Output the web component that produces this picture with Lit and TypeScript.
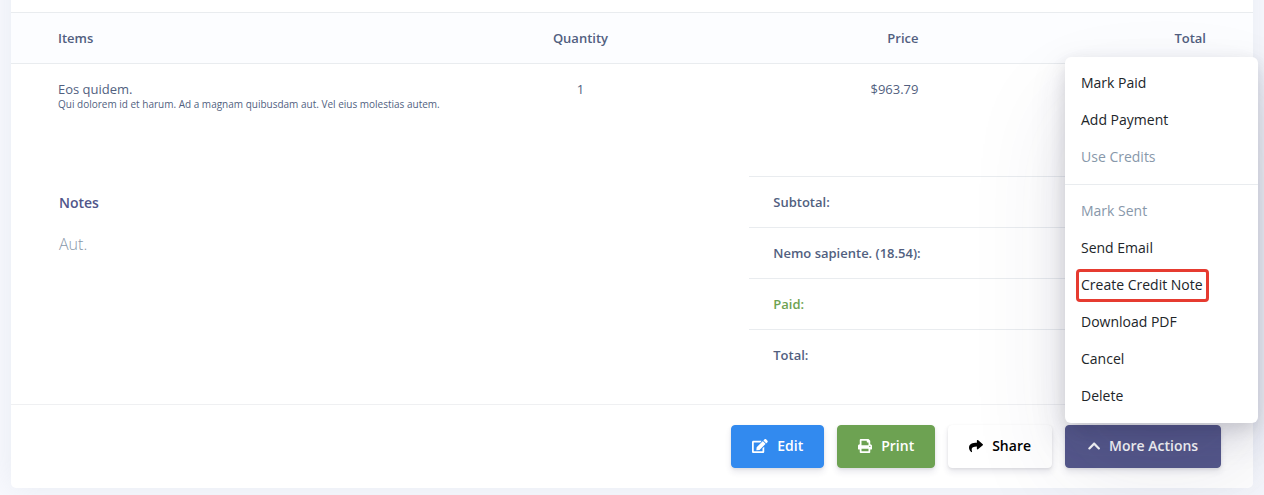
import { LitElement, html, css, svg } from "lit";
import { customElement, property, state } from "lit/decorators.js";

const ICONS = {
  edit: {
    box: "0 0 576 512",
    path: "M402.6 83.2l90.2 90.2c3.8 3.8 3.8 10 0 13.8L274.4 405.6l-92.8 10.3c-12.4 1.4-22.9-9.1-21.5-21.5l10.3-92.8L388.8 83.2c3.8-3.8 10-3.8 13.8 0zm162-22.9l-48.8-48.8c-15.2-15.2-39.9-15.2-55.2 0l-35.4 35.4c-3.8 3.8-3.8 10 0 13.8l90.2 90.2c3.8 3.8 10 3.8 13.8 0l35.4-35.4c15.2-15.3 15.2-40 0-55.2zM384 346.2V448H64V128h229.8c3.2 0 6.2-1.3 8.5-3.5l40-40c7.6-7.6 2.2-20.5-8.5-20.5H48C21.5 64 0 85.5 0 112v352c0 26.5 21.5 48 48 48h352c26.5 0 48-21.5 48-48V306.2c0-10.7-12.9-16-20.5-8.5l-40 40c-2.2 2.3-3.5 5.3-3.5 8.5z",
  },
  print: {
    box: "0 0 512 512",
    path: "M448 192V77.25c0-8.49-3.37-16.62-9.37-22.63L393.37 9.37c-6-6-14.14-9.37-22.63-9.37H96C78.33 0 64 14.33 64 32v160c-35.35 0-64 28.65-64 64v112c0 8.84 7.16 16 16 16h48v96c0 17.67 14.33 32 32 32h320c17.67 0 32-14.33 32-32v-96h48c8.84 0 16-7.16 16-16V256c0-35.35-28.65-64-64-64zm-64 256H128v-96h256v96zm0-224H128V64h192v48c0 8.84 7.16 16 16 16h48v96zm48 72c-13.25 0-24-10.75-24-24 0-13.26 10.75-24 24-24s24 10.74 24 24c0 13.25-10.75 24-24 24z",
  },
  share: {
    box: "0 0 512 512",
    path: "M503.691 189.836L327.687 37.851C312.281 24.546 288 35.347 288 56.015v80.053C127.371 137.907 0 170.1 0 322.326c0 61.441 39.581 122.309 83.333 154.132 13.653 9.931 33.111-2.533 28.077-18.631C66.066 312.814 132.917 274.316 288 272.085V360c0 20.7 24.3 31.453 39.687 18.164l176.004-152c11.071-9.562 11.086-26.753 0-36.328z",
  },
  up: {
    box: "0 0 448 512",
    path: "M240.971 130.524l194.343 194.343c9.373 9.373 9.373 24.569 0 33.941l-22.667 22.667c-9.357 9.357-24.522 9.375-33.901.04L224 227.495 69.255 381.516c-9.379 9.335-24.544 9.317-33.901-.04l-22.667-22.667c-9.373-9.373-9.373-24.569 0-33.941L207.03 130.525c9.372-9.373 24.568-9.373 33.941-.001z",
  },
};

@customElement("action-button")
export class ActionButton extends LitElement {
  @property() icon: keyof typeof ICONS = "edit";
  @property() variant = "info";

  static styles = css`
    :host {
      display: block;
    }
    button {
      display: flex;
      align-items: center;
      justify-content: center;
      gap: 9px;
      width: 100%;
      margin: 0;
      padding: 10px 20px 11px;
      border: 1px solid transparent;
      border-radius: 4px;
      font: 600 14px/20px "Open Sans", sans-serif;
      white-space: nowrap;
      color: #fff;
      cursor: pointer;
      box-shadow: 0 4px 6px rgba(50, 50, 93, 0.11), 0 1px 3px rgba(0, 0, 0, 0.08);
    }
    .info {
      background: #328aef;
      border-color: #328aef;
    }
    .success {
      background: #6da252;
      border-color: #6da252;
    }
    .white {
      background: #fff;
      border-color: #fff;
      color: #000;
    }
    .default {
      background: #55588b;
      border-color: #55588b;
    }
    svg {
      height: 14px;
      fill: currentColor;
    }
  `;

  render() {
    const icon = ICONS[this.icon];
    return html`<button type="button" class=${this.variant}>
      <svg viewBox=${icon.box} aria-hidden="true">${svg`<path d=${icon.path}></path>`}</svg>
      <slot></slot>
    </button>`;
  }
}

interface MenuEntry {
  label: string;
  disabled?: boolean;
  marked?: boolean;
}

@customElement("actions-menu")
export class ActionsMenu extends LitElement {
  @state() private groups: MenuEntry[][] = [
    [{ label: "Mark Paid" }, { label: "Add Payment" }, { label: "Use Credits", disabled: true }],
    [
      { label: "Mark Sent", disabled: true },
      { label: "Send Email" },
      { label: "Create Credit Note", marked: true },
      { label: "Download PDF" },
      { label: "Cancel" },
      { label: "Delete" },
    ],
  ];

  static styles = css`
    :host {
      display: block;
      box-sizing: border-box;
      padding: 8px 0;
      border-radius: 6px;
      background: #fff;
      box-shadow: 0 50px 100px rgba(50, 50, 93, 0.1), 0 15px 35px rgba(50, 50, 93, 0.15),
        0 5px 15px rgba(0, 0, 0, 0.1);
    }
    button {
      display: block;
      width: 100%;
      margin: 0;
      padding: 8px 16px 9px;
      border: 0;
      background: none;
      text-align: left;
      font: 400 14px/20px "Open Sans", sans-serif;
      color: #212529;
      cursor: pointer;
    }
    button:disabled {
      color: #8898aa;
    }
    hr {
      height: 1px;
      margin: 8px 0;
      border: 0;
      background: #e9ecef;
    }
    .marked {
      position: relative;
    }
    .marked::after {
      content: "";
      position: absolute;
      inset: -6px -6px -8px -5px;
      border: 3px solid #e63b30;
      border-radius: 4px;
    }
  `;

  render() {
    return this.groups.map(
      (group, i) => html`${i ? html`<hr />` : ""}${group.map(
        (e) => html`<button type="button" ?disabled=${e.disabled}>
          <span class=${e.marked ? "marked" : ""}>${e.label}</span>
        </button>`
      )}`
    );
  }
}

@customElement("app-root")
export class AppRoot extends LitElement {
  private totals = [
    { label: "Subtotal:" },
    { label: "Nemo sapiente. (18.54):" },
    { label: "Paid:", paid: true },
    { label: "Total:" },
  ];

  static styles = css`
    :host {
      display: block;
      min-height: 100vh;
      box-sizing: border-box;
      padding: 0 11px 7px;
      overflow: hidden;
      background: #f8f9fe;
      font: 400 13px/18px "Open Sans", sans-serif;
      color: #525f7f;
    }
    .card {
      margin-top: -40px;
      padding-top: 52px;
      border-radius: 5px;
      background: #fff;
      box-shadow: 0 0 32px rgba(136, 152, 170, 0.15);
    }
    table {
      width: 100%;
      border-collapse: separate;
      border-spacing: 0;
    }
    th,
    td {
      padding: 16px 24px;
      text-align: left;
      vertical-align: top;
    }
    th {
      font-weight: 600;
    }
    .items {
      table-layout: fixed;
    }
    .items th {
      border-top: 1px solid #e9ecef;
      border-bottom: 1px solid #e9ecef;
      background: #fcfdff;
    }
    .items .name {
      width: 37.5%;
      box-sizing: border-box;
      padding-left: 47px;
      padding-right: 0;
    }
    .items .quantity {
      width: 16.7%;
      box-sizing: border-box;
      text-align: center;
    }
    .items .price {
      width: 20.8%;
      box-sizing: border-box;
      text-align: right;
    }
    .items .total {
      padding-right: 47px;
      text-align: right;
    }
    .description {
      display: block;
      font-size: 10px;
      line-height: 12px;
    }
    .details {
      display: grid;
      grid-template-columns: 67fr 45fr;
      margin-top: 50px;
      padding: 0 24px 24px;
    }
    .notes {
      padding: 16px 24px;
    }
    h2 {
      margin: 0 0 19px;
      font-size: 14px;
      line-height: 21px;
      font-weight: 600;
      color: #51568a;
    }
    p {
      margin: 0;
      font-size: 16px;
      line-height: 24px;
      font-weight: 300;
      color: #8898aa;
    }
    .totals th {
      border-top: 1px solid #e9ecef;
    }
    .totals .paid {
      color: #6da252;
    }
    footer {
      display: flex;
      justify-content: flex-end;
      gap: 13px;
      padding: 20px 32px;
      border-top: 1px solid #eff0f2;
    }
    .dropdown {
      position: relative;
      min-width: 156px;
    }
    actions-menu {
      position: absolute;
      left: 0;
      bottom: calc(100% + 2px);
      width: 193px;
    }
  `;

  render() {
    return html`<main class="card">
      <table class="items">
        <thead>
          <tr>
            <th class="name" scope="col">Items</th>
            <th class="quantity" scope="col">Quantity</th>
            <th class="price" scope="col">Price</th>
            <th class="total" scope="col">Total</th>
          </tr>
        </thead>
        <tbody>
          <tr>
            <td class="name">
              Eos quidem.
              <small class="description"
                >Qui dolorem id et harum. Ad a magnam quibusdam aut. Vel eius molestias autem.</small
              >
            </td>
            <td class="quantity">1</td>
            <td class="price">$963.79</td>
            <td class="total"></td>
          </tr>
        </tbody>
      </table>
      <section class="details">
        <div class="notes">
          <h2>Notes</h2>
          <p>Aut.</p>
        </div>
        <table class="totals">
          <tbody>
            ${this.totals.map(
              (t) => html`<tr>
                <th scope="row" class=${t.paid ? "paid" : ""}>${t.label}</th>
              </tr>`
            )}
          </tbody>
        </table>
      </section>
      <footer>
        <action-button icon="edit" variant="info">Edit</action-button>
        <action-button icon="print" variant="success">Print</action-button>
        <action-button icon="share" variant="white">Share</action-button>
        <div class="dropdown">
          <action-button icon="up" variant="default">More Actions</action-button>
          <actions-menu></actions-menu>
        </div>
      </footer>
    </main>`;
  }
}
